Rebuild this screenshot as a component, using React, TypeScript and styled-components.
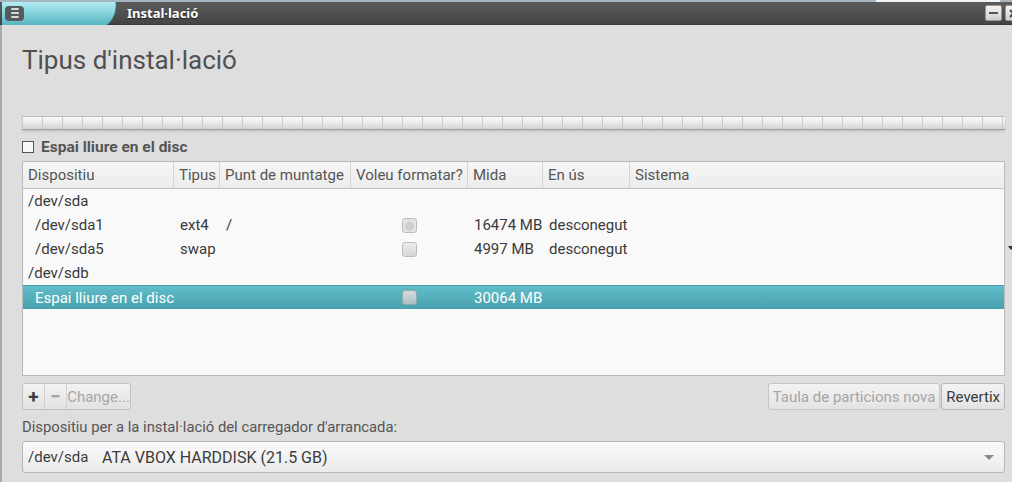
import React from "react";
import styled, { createGlobalStyle } from "styled-components";

const Global = createGlobalStyle`
  html, body { margin: 0; padding: 0; background: #dedede; }
  body { font-family: Roboto, "Noto Sans", "Liberation Sans", sans-serif; overflow: hidden; }
  * { box-sizing: border-box; }
`;

const Screen = styled.div`
  width: 1012px;
  height: 482px;
  display: flex;
  flex-direction: column;
  overflow: hidden;
  background: #dedede;
`;

const DesktopStrip = styled.div`
  height: 2px;
  flex: none;
  background: linear-gradient(90deg, #a7b4c1 0, #a7b4c1 876px, #f4f4f4 876px, #f4f4f4 1000px, #a7b4c1 1000px);
`;

const TitleBar = styled.div`
  position: relative;
  height: 23px;
  flex: none;
  display: flex;
  align-items: center;
  background: linear-gradient(#5c5c5c, #444444);
  border-bottom: 1px solid #3a3a3a;
`;

const Tab = styled.div`
  position: relative;
  width: 125px;
  height: 100%;
  flex: none;
  padding-left: 5px;
  display: flex;
  align-items: center;
`;

const TabShape = styled.svg`
  position: absolute;
  left: 0;
  top: 0;
`;

const MenuIcon = styled.div`
  position: relative;
  width: 19px;
  height: 15px;
  border-radius: 4px;
  background: #555a5c;
  display: flex;
  flex-direction: column;
  align-items: center;
  justify-content: center;
  gap: 2px;
`;

const MenuLine = styled.span`
  width: 8px;
  height: 2px;
  background: #d8d8d8;
  border-radius: 1px;
`;

const WindowTitle = styled.div`
  font-family: "Noto Sans", "Open Sans", sans-serif;
  font-weight: 700;
  font-size: 13px;
  color: #ffffff;
  text-shadow: 0 1px 1px #222;
  margin-left: 2px;
  flex: 1;
`;

const WinButton = styled.div<{ $cut?: boolean }>`
  width: 17px;
  height: 16px;
  flex: none;
  margin-right: ${(p) => (p.$cut ? "-10px" : "3px")};
  border: 1px solid #9a9a9a;
  border-radius: 2px;
  background: linear-gradient(#f4f4f4, #cfcfcf);
  display: flex;
  align-items: center;
  justify-content: center;
`;

const MinLine = styled.span`
  width: 9px;
  height: 2px;
  background: #555;
`;

const Body = styled.div`
  position: relative;
  flex: 1;
  display: flex;
  flex-direction: column;
  padding: 0 7px 0 20px;
  border-left: 2px solid #aaaaaa;
`;

const EdgeMark = styled.span`
  position: absolute;
  right: -2px;
  top: 221px;
  width: 0;
  height: 0;
  border-left: 3px solid transparent;
  border-right: 3px solid transparent;
  border-top: 4px solid #333;
`;

const Heading = styled.h1`
  margin: 20px 0 0 0;
  height: 30px;
  font-weight: 400;
  font-size: 26px;
  line-height: 30px;
  color: #505050;
`;

const Bar = styled.div`
  margin-top: 41px;
  height: 14px;
  border-top: 1px solid #bcbcbc;
  border-bottom: 1px solid #9d9d9d;
  background:
    repeating-linear-gradient(90deg, #c9c9c9 0 1px, transparent 1px 20px),
    linear-gradient(#fafafa, #ececec 45%, #d2d2d2);
  box-shadow: 0 2px 2px rgba(0, 0, 0, 0.1);
`;

const Legend = styled.div`
  margin-top: 8px;
  height: 17px;
  display: flex;
  align-items: center;
  gap: 7px;
  font-weight: 700;
  font-size: 15.5px;
  color: #555;
`;

const LegendBox = styled.span`
  width: 12px;
  height: 12px;
  border: 1px solid #555;
  background: #f8f8f8;
`;

const Table = styled.div`
  margin-top: 6px;
  height: 215px;
  border: 1px solid #b9b9b9;
  background: #f9f9f9;
  display: flex;
  flex-direction: column;
`;

const COLS = "151px 46px 131px 117px 75px 87px 1fr";

const HeaderRow = styled.div`
  display: grid;
  grid-template-columns: ${COLS};
  height: 27px;
  flex: none;
  background: linear-gradient(#f6f6f6, #ececec);
  border-bottom: 1px solid #c2c2c2;
`;

const HeadCell = styled.div`
  padding-left: 5px;
  display: flex;
  align-items: center;
  font-size: 15px;
  color: #555;
  border-right: 1px solid #d4d4d4;
  white-space: nowrap;
  &:last-child { border-right: none; }
`;

const Row = styled.div<{ $selected?: boolean }>`
  display: grid;
  grid-template-columns: ${COLS};
  height: 24px;
  flex: none;
  color: ${(p) => (p.$selected ? "#ffffff" : "#3a3a3a")};
  background: ${(p) => (p.$selected ? "linear-gradient(#60bdc9, #4aa1ad)" : "transparent")};
  border-top: ${(p) => (p.$selected ? "1px solid #4b9ea9" : "none")};
`;

const Cell = styled.div<{ $indent?: boolean; $center?: boolean }>`
  padding-left: ${(p) => (p.$indent ? "12px" : "6px")};
  display: flex;
  align-items: center;
  justify-content: ${(p) => (p.$center ? "center" : "flex-start")};
  font-size: 15px;
  white-space: nowrap;
  ${(p) => (p.$center ? "padding-left: 0; padding-right: 1px;" : "")}
`;

const FirstCell = styled(Cell)`
  padding-left: ${(p) => (p.$indent ? "12px" : "5px")};
`;

const Check = styled.span<{ $inset?: boolean; $onSel?: boolean }>`
  width: 15px;
  height: 15px;
  border-radius: 3px;
  border: 1px solid ${(p) => (p.$onSel ? "#8fa9ad" : "#bdbdbd")};
  background: ${(p) =>
    p.$onSel
      ? "linear-gradient(#d2dcdd, #aebfc2)"
      : p.$inset
      ? "radial-gradient(circle at 50% 55%, #cfcfcf 0 4px, #e4e4e4 5px)"
      : "linear-gradient(#ececec, #d6d6d6)"};
`;

const Toolbar = styled.div`
  margin-top: 7px;
  height: 27px;
  display: flex;
  align-items: stretch;
`;

const Group = styled.div`
  display: flex;
  border: 1px solid #c2c2c2;
  border-radius: 3px;
  background: linear-gradient(#f2f2f2, #e2e2e2);
  overflow: hidden;
`;

const GroupBtn = styled.div<{ $w: number; $disabled?: boolean; $icon?: boolean }>`
  width: ${(p) => p.$w}px;
  display: flex;
  align-items: center;
  justify-content: center;
  border-right: 1px solid #d0d0d0;
  font-size: ${(p) => (p.$icon ? "19px" : "15px")};
  font-weight: ${(p) => (p.$icon ? 700 : 400)};
  color: ${(p) => (p.$disabled ? "#a6a6a6" : "#3c3c3c")};
  white-space: nowrap;
  &:last-child { border-right: none; }
`;

const Spacer = styled.div`
  flex: 1;
`;

const Button = styled.div<{ $disabled?: boolean }>`
  padding: 0 4px;
  display: flex;
  align-items: center;
  border: 1px solid ${(p) => (p.$disabled ? "#c6c6c6" : "#b4b4b4")};
  border-radius: 3px;
  background: linear-gradient(#f3f3f3, #e3e3e3);
  font-size: 15px;
  color: ${(p) => (p.$disabled ? "#a6a6a6" : "#3c3c3c")};
  & + & { margin-left: 1px; }
`;

const Label = styled.div`
  margin-top: 8px;
  height: 17px;
  font-size: 14.8px;
  color: #555;
  display: flex;
  align-items: center;
`;

const Combo = styled.div`
  margin-top: 6px;
  height: 32px;
  border: 1px solid #b6b6b6;
  border-radius: 3px;
  background: linear-gradient(#fafafa, #ebebeb);
  display: flex;
  align-items: center;
  padding: 0 10px 0 5px;
  font-size: 15px;
  color: #3c3c3c;
  white-space: pre;
`;

const ComboDev = styled.span`
  width: 74px;
  flex: none;
`;

const ComboText = styled.span`
  flex: 1;
  font-size: 16px;
`;

const Arrow = styled.span`
  width: 0;
  height: 0;
  border-left: 5px solid transparent;
  border-right: 5px solid transparent;
  border-top: 5px solid #8a8a8a;
`;

type R = { dev: string; child?: boolean; type?: string; mount?: string; check?: "inset" | "plain"; size?: string; used?: string; sel?: boolean };

const rows: R[] = [
  { dev: "/dev/sda" },
  { dev: "/dev/sda1", child: true, type: "ext4", mount: "/", check: "inset", size: "16474 MB", used: "desconegut" },
  { dev: "/dev/sda5", child: true, type: "swap", check: "plain", size: "4997 MB", used: "desconegut" },
  { dev: "/dev/sdb" },
  { dev: "Espai lliure en el disc", child: true, check: "plain", size: "30064 MB", sel: true },
];

const headers = ["Dispositiu", "Tipus", "Punt de muntatge", "Voleu formatar?", "Mida", "En ús", "Sistema"];

export default function App() {
  return (
    <Screen>
      <Global />
      <DesktopStrip />
      <TitleBar>
        <Tab>
          <TabShape width="125" height="23" viewBox="0 0 125 23">
            <defs>
              <linearGradient id="tabg" x1="0" y1="0" x2="0" y2="1">
                <stop offset="0" stopColor="#b2eef2" />
                <stop offset="1" stopColor="#56b4c2" />
              </linearGradient>
            </defs>
            <path d="M2 0 H116 C117 8 114 18 107 23 H2 Z" fill="url(#tabg)" />
            <path d="M116 0 C117 8 114 18 107 23" fill="none" stroke="#3c6f78" strokeWidth="1" />
          </TabShape>
          <MenuIcon>
            <MenuLine />
            <MenuLine />
            <MenuLine />
          </MenuIcon>
        </Tab>
        <WindowTitle>Instal·lació</WindowTitle>
        <WinButton>
          <MinLine />
        </WinButton>
        <WinButton $cut>
          <svg width="9" height="9" viewBox="0 0 9 9">
            <path d="M1 1 L8 8 M8 1 L1 8" stroke="#444" strokeWidth="2" />
          </svg>
        </WinButton>
      </TitleBar>
      <Body>
        <EdgeMark />
        <Heading>Tipus d'instal·lació</Heading>
        <Bar />
        <Legend>
          <LegendBox />
          Espai lliure en el disc
        </Legend>
        <Table>
          <HeaderRow>
            {headers.map((h) => (
              <HeadCell key={h}>{h}</HeadCell>
            ))}
          </HeaderRow>
          {rows.map((r) => (
            <Row key={r.dev} $selected={r.sel}>
              <FirstCell $indent={r.child}>{r.dev}</FirstCell>
              <Cell>{r.type}</Cell>
              <Cell>{r.mount}</Cell>
              <Cell $center>{r.check && <Check $inset={r.check === "inset"} $onSel={r.sel} />}</Cell>
              <Cell>{r.size}</Cell>
              <Cell>{r.used}</Cell>
              <Cell />
            </Row>
          ))}
        </Table>
        <Toolbar>
          <Group>
            <GroupBtn $w={22} $icon>+</GroupBtn>
            <GroupBtn $w={22} $icon $disabled>−</GroupBtn>
            <GroupBtn $w={63} $disabled>Change...</GroupBtn>
          </Group>
          <Spacer />
          <Button $disabled>Taula de particions nova</Button>
          <Button>Revertix</Button>
        </Toolbar>
        <Label>Dispositiu per a la instal·lació del carregador d'arrancada:</Label>
        <Combo>
          <ComboDev>/dev/sda</ComboDev>
          <ComboText>ATA VBOX HARDDISK (21.5 GB)</ComboText>
          <Arrow />
        </Combo>
      </Body>
    </Screen>
  );
}
